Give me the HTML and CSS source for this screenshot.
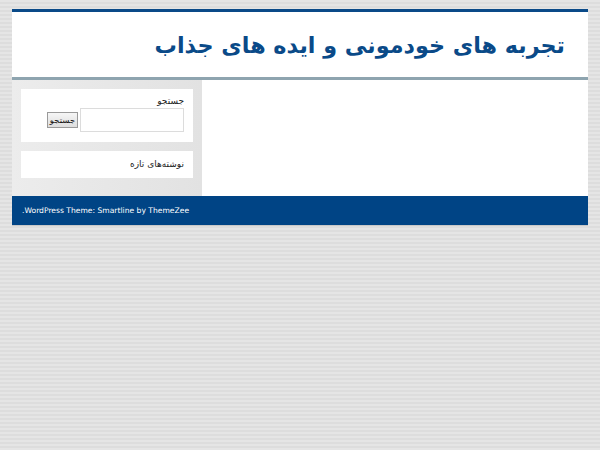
FILE: index.html
```html
<!DOCTYPE html>
<html lang="fa" dir="rtl">
<head>
<meta charset="utf-8">
<title>تجربه های خودمونی و ایده های جذاب</title>
<link rel="stylesheet" href="styles.css">
</head>
<body>
<div class="wrapper">
  <header class="site-header">
    <h1 class="site-title">تجربه های خودمونی و ایده های جذاب</h1>
  </header>
  <div class="site-body">
    <main class="content"></main>
    <aside class="sidebar">
      <section class="widget search-widget">
        <label class="search-label">جستجو</label>
        <div class="search-row">
          <input class="search-input" type="text">
          <button class="search-btn">جستجو</button>
        </div>
      </section>
      <section class="widget">
        <h3 class="widget-title">نوشته‌های تازه</h3>
      </section>
    </aside>
  </div>
  <footer class="site-footer">
    <span class="credit">WordPress Theme: Smartline by ThemeZee.</span>
  </footer>
</div>
</body>
</html>
```
FILE: styles.css
```css
html, body {
  margin: 0;
  padding: 0;
}
body {
  background: repeating-linear-gradient(to bottom, #e5e5e5 0, #e5e5e5 2px, #dddddd 2px, #dddddd 4px);
  font-family: "DejaVu Sans", sans-serif;
  height: 450px;
  padding-top: 9px;
  box-sizing: border-box;
}
.wrapper {
  width: 576px;
  margin-left: 12px;
  margin-right: 12px;
  border-top: 3px solid #0a4a88;
}
.site-header {
  background: #fff;
  height: 65px;
  border-bottom: 3px solid #8ea4af;
  display: flex;
  align-items: center;
  padding-right: 23px;
}
.site-title {
  margin: 0;
  font-size: 22.3px;
  font-weight: bold;
  color: #0a4a88;
  position: relative;
  top: 0;
}
.site-body {
  display: flex;
  flex-direction: row;
  height: 116px;
}
.content {
  flex: 1;
  background: #fff;
}
.sidebar {
  width: 172px;
  padding: 9px 9px 0;
  background: linear-gradient(to left, #e2e2e2, #ececec);
  display: flex;
  flex-direction: column;
  gap: 9px;
}
.widget {
  background: #fff;
  padding: 0 9px;
  font-size: 9px;
  color: #222;
}
.search-widget {
  height: 53px;
  display: flex;
  flex-direction: column;
  padding-top: 7px;
  box-sizing: border-box;
}
.search-label {
  display: block;
  line-height: 11px;
}
.search-row {
  display: flex;
  align-items: center;
  gap: 2px;
  margin-top: 1px;
}
.search-input {
  width: 104px;
  height: 24px;
  box-sizing: border-box;
  border: 1px solid #dcdcdc;
  margin: 0;
  padding: 0;
  background: #fff;
}
.search-btn {
  font-family: "DejaVu Sans", sans-serif;
  font-size: 8.5px;
  height: 16px;
  width: 31px;
  padding: 0;
  margin: 0;
  border: 1px solid #9a9a9a;
  background: linear-gradient(#f6f6f6, #dedede);
  color: #111;
}
.widget-title {
  margin: 0;
  height: 27px;
  line-height: 27px;
  font-size: 9px;
  font-weight: normal;
}
.site-footer {
  background: #004485;
  height: 29px;
  display: flex;
  align-items: center;
  justify-content: flex-end;
  padding-left: 10px;
  box-shadow: 0 1px 0 #c8c8c8;
}
.credit {
  color: #fff;
  font-size: 7.6px;
  direction: rtl;
}
```
